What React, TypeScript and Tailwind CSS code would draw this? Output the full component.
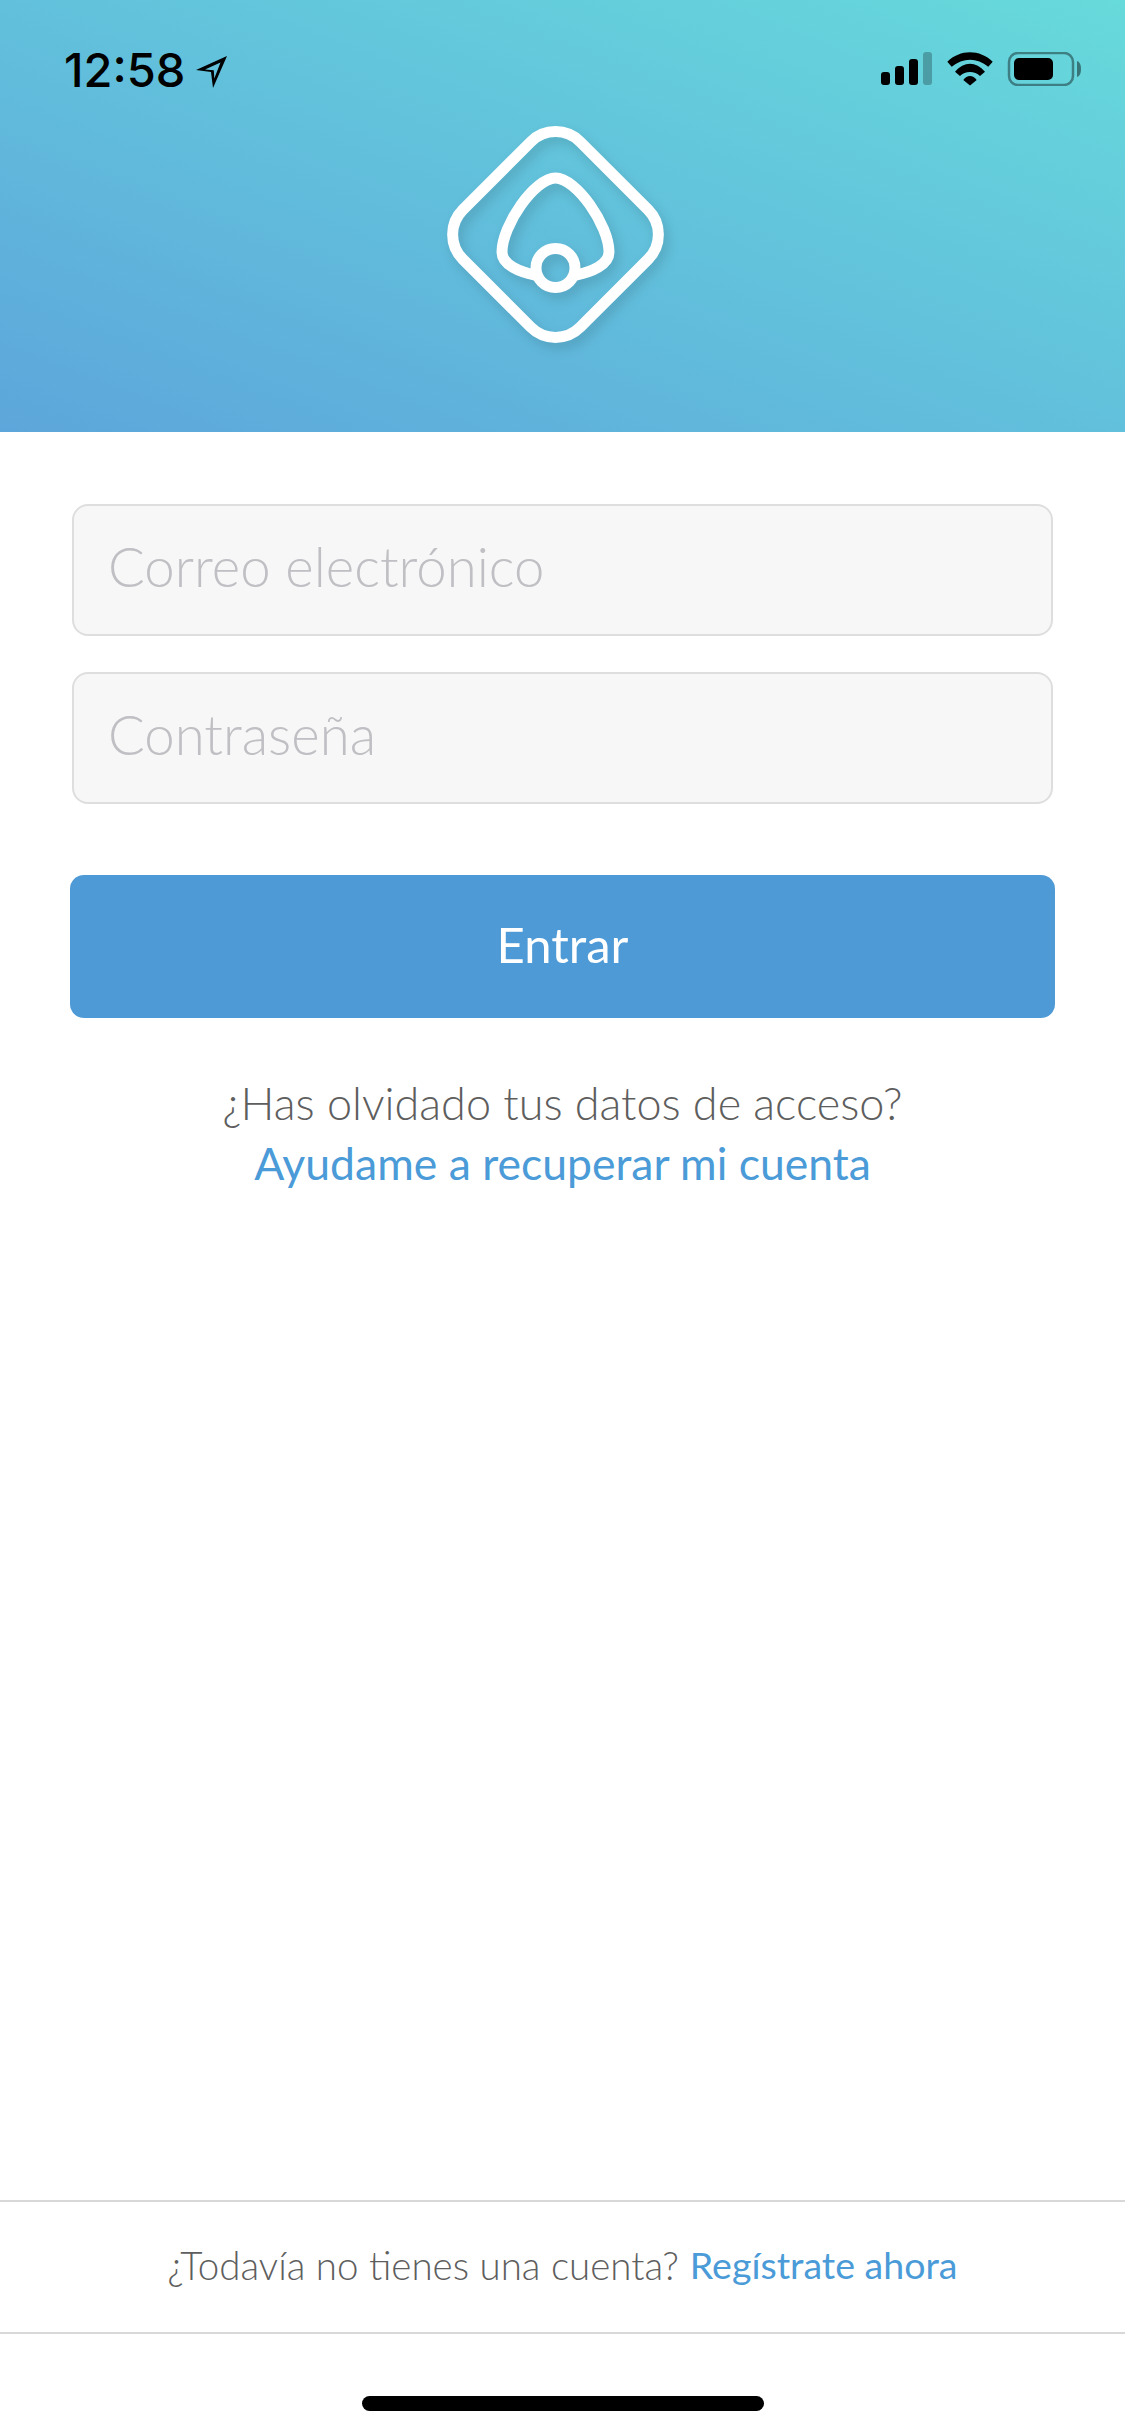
function StatusIcons() {
  return (
    <svg width="200" height="34" viewBox="0 0 200 34" className="shrink-0">
      <rect x="0" y="20" width="9" height="13" rx="3" fill="#000" />
      <rect x="14" y="14" width="9" height="19" rx="3" fill="#000" />
      <rect x="28" y="7" width="9" height="26" rx="3" fill="#000" />
      <rect x="42" y="0" width="9" height="33" rx="3" fill="#000" fillOpacity="0.25" />
      <path
        d="M66.300 9.700 C79 -3 99 -3 111.700 9.700 L107.300 14.700 C96 5.500 82 5.500 70.700 14.700 Z M74 19.700 C83 9 95 9 104 19.700 L99 24 C94 18.500 84 18.500 79 24 Z M82.300 28 C86 22.500 92 22.500 95.700 28 L89 33.500 Z"
        fill="#000"
      />
      <rect x="128" y="1" width="64" height="32" rx="9" fill="none" stroke="#000" strokeOpacity="0.4" strokeWidth="2.500" />
      <rect x="133" y="6" width="39" height="22" rx="5" fill="#000" />
      <path d="M196 9 C199 10 200 13 200 17 C200 21 199 24 196 25 Z" fill="#000" fillOpacity="0.45" />
    </svg>
  );
}

function Logo() {
  return (
    <svg width="290" height="270" viewBox="0 0 290 270" className="drop-shadow-[4px_6px_6px_rgba(0,0,0,0.13)]">
      <rect
        x="52.500"
        y="51.500"
        width="166"
        height="166"
        rx="35"
        fill="none"
        stroke="#fff"
        strokeWidth="11"
        transform="rotate(45 135.500 134.500)"
      />
      <path
        d="M115 175 C100 172 82 165 82 152 C82 125 115 78 135.500 78 C156 78 189 125 189 152 C189 165 171 172 156 175"
        fill="none"
        stroke="#fff"
        strokeWidth="11"
      />
      <circle cx="135.500" cy="168" r="19.500" fill="none" stroke="#fff" strokeWidth="11" />
    </svg>
  );
}

export default function App() {
  return (
    <div className="flex flex-col h-[2436px] w-[1125px] bg-white font-['Lato',sans-serif] overflow-hidden">
      <header className="h-[432px] flex flex-col bg-gradient-to-tr from-[#5da6db] to-[#67dadb]">
        <div className="flex items-start justify-between pl-[64px] pr-[44px] pt-[52px] font-['Inter',sans-serif]">
          <div className="flex items-center gap-[11px] text-black">
            <span className="text-[47px] leading-[36px] font-medium">12:58</span>
            <svg width="32" height="32" viewBox="0 0 32 32" className="mt-[4px]">
              <path d="M31 0 L0 14 L15 16 L17 32 Z M24.500 6.500 L9 13.400 L17.800 14.300 L18.300 22.500 Z" fill="#000" fillRule="evenodd" />
            </svg>
          </div>
          <StatusIcons />
        </div>
        <div className="flex justify-center mt-[12px] pl-[5px]">
          <Logo />
        </div>
      </header>

      <main className="flex-1 flex flex-col px-[70px] pt-[72px]">
        <div className="flex flex-col gap-[36px] px-[2px]">
          <input
            placeholder="Correo electrónico"
            className="h-[132px] rounded-[16px] border-2 border-[#dedede] bg-[#f7f7f7] px-[34px] pb-[8px] text-[54.500px] font-light placeholder:text-[#bfbfc4]"
          />
          <input
            placeholder="Contraseña"
            className="h-[132px] rounded-[16px] border-2 border-[#dedede] bg-[#f7f7f7] px-[34px] pb-[8px] text-[54.500px] font-light placeholder:text-[#bfbfc4]"
          />
        </div>
        <button className="mt-[71px] h-[143px] rounded-[14px] bg-[#4e9ad6] pb-[4px] text-white text-[49px]">Entrar</button>
        <div className="mt-[56px] text-center leading-[59px]">
          <p className="text-[45px] text-[#5e5e5e] font-light">¿Has olvidado tus datos de acceso?</p>
          <a className="text-[44.500px] text-[#4a9bd8]">Ayudame a recuperar mi cuenta</a>
        </div>
      </main>

      <footer className="h-[134px] flex items-center justify-center gap-[11px] border-y-2 border-[#d8d8d8] pb-[3px]">
        <span className="text-[38.500px] text-[#5e5e5e] font-light">¿Todavía no tienes una cuenta?</span>
        <a className="text-[37.500px] text-[#4a9bd8]">Regístrate ahora</a>
      </footer>
      <div className="h-[102px] flex justify-center pt-[62px]">
        <div className="w-[402px] h-[15px] rounded-full bg-black" />
      </div>
    </div>
  );
}
